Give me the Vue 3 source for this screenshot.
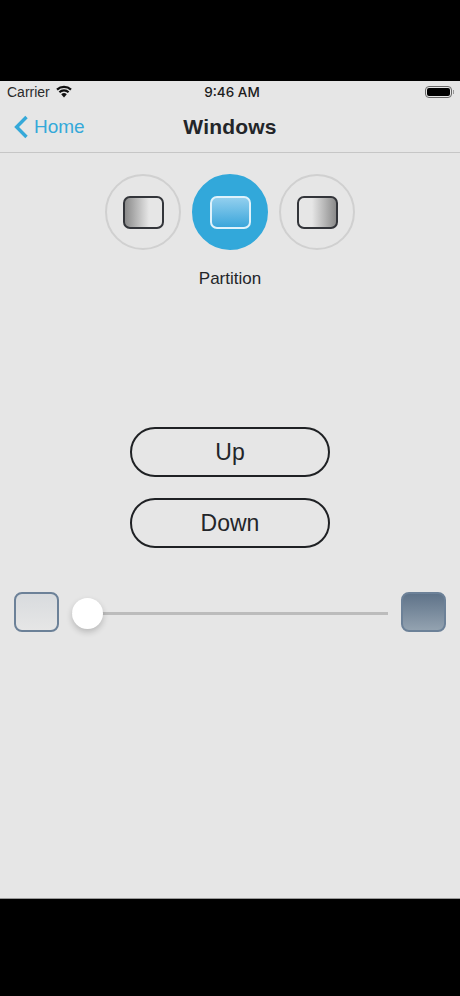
<template>
  <div class="page">
    <div class="bar-black top"></div>
    <div class="screen">
      <div class="status">
        <div class="status-left">
          <span>Carrier</span>
          <svg class="wifi" width="16" height="13" viewBox="0 0 16 13">
            <path d="M8 12.5 5.2 9.3a4.2 4.2 0 0 1 5.6 0z" fill="#111" />
            <path d="M1 4.6a10.2 10.2 0 0 1 14 0" fill="none" stroke="#111" stroke-width="2.2" />
            <path d="M3.4 7.2a6.8 6.8 0 0 1 9.2 0" fill="none" stroke="#111" stroke-width="2.2" />
          </svg>
        </div>
        <span class="clock">9:46 AM</span>
        <div class="battery-wrap">
          <div class="battery"><div class="battery-fill"></div></div>
          <div class="battery-tip"></div>
        </div>
      </div>
      <div class="nav">
        <div class="back">
          <svg width="16" height="24" viewBox="0 0 16 24">
            <path d="M13.5 2 3.6 12 13.5 22" fill="none" stroke="#35a9d9" stroke-width="3.4" />
          </svg>
          <span>Home</span>
        </div>
        <h1>Windows</h1>
      </div>

      <div class="content">
        <div class="modes">
          <button v-for="mode in modes" :key="mode" class="mode" :class="{ active: mode === activeMode }">
            <span class="glass" :class="mode"></span>
          </button>
        </div>
        <p class="caption">Partition</p>

        <div class="actions">
          <button class="pill">Up</button>
          <button class="pill">Down</button>
        </div>

        <div class="tint">
          <div class="swatch light"></div>
          <div class="track"><div class="thumb"></div></div>
          <div class="swatch dark"></div>
        </div>
      </div>
    </div>
    <div class="bar-black bottom"></div>
  </div>
</template>

<script setup>
const modes = ["left", "partition", "right"];
const activeMode = "partition";
</script>

<style>
html,
body {
  margin: 0;
  background: #000;
}
</style>

<style scoped>
.page {
  width: 460px;
  height: 996px;
  display: flex;
  flex-direction: column;
  background: #000;
  font-family: "Liberation Sans", Arial, sans-serif;
  color: #232529;
  overflow: hidden;
}
.bar-black.top {
  height: 81px;
  background: #000;
}
.bar-black.bottom {
  height: 98px;
  background: #000;
  border-top: 1px solid #999;
  box-sizing: border-box;
}
.screen {
  flex: 1;
  display: flex;
  flex-direction: column;
  background: #e6e6e6;
}
.status {
  height: 22px;
  padding: 0 6px 0 7px;
  display: flex;
  align-items: center;
  justify-content: space-between;
  position: relative;
  font-size: 14px;
  color: #2b2b2b;
}
.status-left {
  display: flex;
  align-items: center;
  gap: 6px;
}
.wifi {
  margin-top: -2px;
}
.clock {
  position: absolute;
  left: 4px;
  right: 0;
  text-align: center;
  font-weight: 500;
  font-family: "Inter", "Liberation Sans", sans-serif;
  font-size: 13.5px;
  color: #1c1c1c;
}
.battery-wrap {
  display: flex;
  align-items: center;
  gap: 1px;
}
.battery {
  width: 23px;
  height: 8px;
  border: 1px solid #666;
  border-radius: 4px;
  padding: 1px;
}
.battery-fill {
  height: 100%;
  background: #000;
  border-radius: 2px;
}
.battery-tip {
  width: 1px;
  height: 4px;
  background: #999;
}
.nav {
  height: 48px;
  padding-bottom: 1px;
  display: flex;
  align-items: center;
  justify-content: center;
  position: relative;
  border-bottom: 1px solid #c6c6c6;
}
.nav h1 {
  margin: 0;
  font-size: 21px;
  font-weight: 700;
  letter-spacing: 0.2px;
}
.back {
  position: absolute;
  left: 13px;
  top: 12px;
  display: flex;
  align-items: center;
  gap: 5px;
  font-size: 19px;
  color: #35a9d9;
}
.content {
  display: flex;
  flex-direction: column;
  align-items: center;
}
.modes {
  margin-top: 21px;
  display: flex;
  gap: 11px;
}
.mode {
  width: 76px;
  height: 76px;
  padding: 0;
  border-radius: 50%;
  border: 2px solid #d0d0d0;
  background: transparent;
  display: flex;
  align-items: center;
  justify-content: center;
}
.mode.active {
  background: #32a8da;
  border-color: #32a8da;
}
.glass {
  width: 41px;
  height: 33px;
  box-sizing: border-box;
  border: 2px solid #33353a;
  border-radius: 7px;
}
.glass.left {
  background: linear-gradient(to right, #8a8a8a, #e6e6e6 65%);
}
.glass.right {
  background: linear-gradient(to right, #e6e6e6 35%, #8a8a8a);
}
.glass.partition {
  border-color: #dff2fb;
  background: linear-gradient(to bottom, #92cfee, #3ba6db);
}
.caption {
  margin: 19px 0 0;
  font-size: 17px;
  line-height: 20px;
}
.actions {
  margin-top: 138px;
  display: flex;
  flex-direction: column;
  gap: 21px;
}
.pill {
  width: 200px;
  height: 50px;
  border: 2px solid #1f2124;
  border-radius: 25px;
  background: transparent;
  font-family: inherit;
  font-size: 23px;
  color: #232529;
}
.tint {
  width: 100%;
  box-sizing: border-box;
  margin-top: 44px;
  padding: 0 14px;
  display: flex;
  align-items: center;
}
.swatch {
  width: 45px;
  height: 40px;
  box-sizing: border-box;
  border-radius: 8px;
  border: 2px solid #6c8198;
}
.swatch.light {
  background: linear-gradient(to bottom, #d8dbde, #e6e6e6);
}
.swatch.dark {
  background: linear-gradient(to bottom, #5f7389, #93a2b0);
}
.track {
  flex: 1;
  height: 3px;
  margin: 2px 13px 0;
  background: #bcbcbc;
  position: relative;
}
.thumb {
  position: absolute;
  left: 0;
  top: -14px;
  width: 31px;
  height: 31px;
  border-radius: 50%;
  background: #fff;
  box-shadow: 0 3px 6px rgba(0, 0, 0, 0.2);
}
</style>
